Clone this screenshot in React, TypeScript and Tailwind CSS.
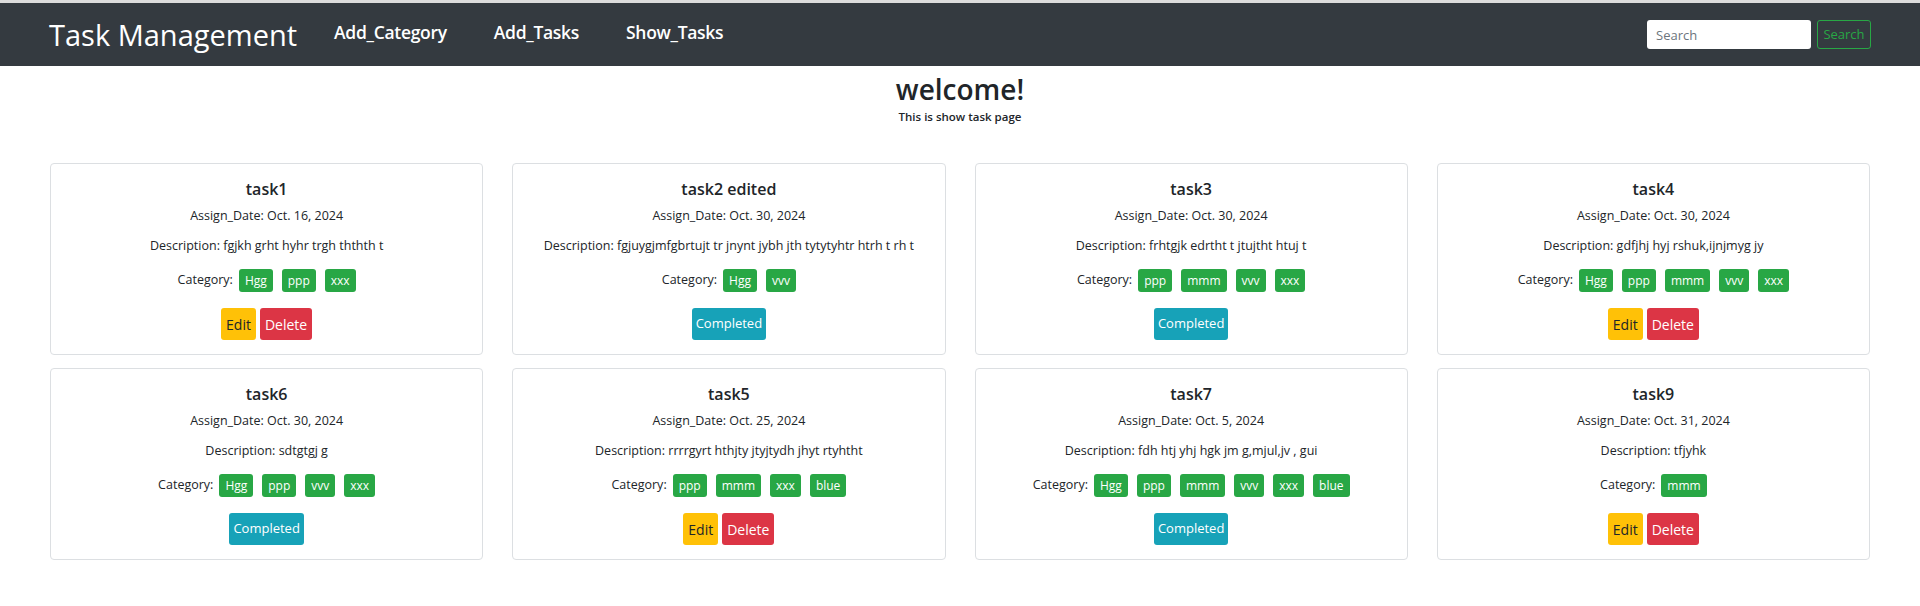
import React from "react";

type Task = {
  title: string;
  date: string;
  description: string;
  categories: string[];
  completed: boolean;
};

const tasks: Task[] = [
  { title: "task1", date: "Oct. 16, 2024", description: "fgjkh grht hyhr trgh ththth t", categories: ["Hgg", "ppp", "xxx"], completed: false },
  { title: "task2 edited", date: "Oct. 30, 2024", description: "fgjuygjmfgbrtujt tr jnynt jybh jth tytytyhtr htrh t rh t", categories: ["Hgg", "vvv"], completed: true },
  { title: "task3", date: "Oct. 30, 2024", description: "frhtgjk edrtht t jtujtht htuj t", categories: ["ppp", "mmm", "vvv", "xxx"], completed: true },
  { title: "task4", date: "Oct. 30, 2024", description: "gdfjhj hyj rshuk,ijnjmyg jy", categories: ["Hgg", "ppp", "mmm", "vvv", "xxx"], completed: false },
  { title: "task6", date: "Oct. 30, 2024", description: "sdtgtgj g", categories: ["Hgg", "ppp", "vvv", "xxx"], completed: true },
  { title: "task5", date: "Oct. 25, 2024", description: "rrrrgyrt hthjty jtyjtydh jhyt rtyhtht", categories: ["ppp", "mmm", "xxx", "blue"], completed: false },
  { title: "task7", date: "Oct. 5, 2024", description: "fdh htj yhj hgk jm g,mjul,jv , gui", categories: ["Hgg", "ppp", "mmm", "vvv", "xxx", "blue"], completed: true },
  { title: "task9", date: "Oct. 31, 2024", description: "tfjyhk", categories: ["mmm"], completed: false },
];

const TaskCard: React.FC<{ task: Task }> = ({ task }) => {
  return (
    <div className="flex flex-col items-center h-[192px] border border-[#dcdfe2] rounded-[4px] bg-white pt-[15px] text-[#212529]">
      <div className="text-[16px] leading-[20px] font-semibold">{task.title}</div>
      <div className="mt-[8px] text-[12.5px] leading-[18px]">Assign_Date: {task.date}</div>
      <div className="mt-[12px] text-[12.5px] leading-[18px]">Description: {task.description}</div>
      <div className="mt-[14px] flex items-center h-[23px] text-[12.5px]">
        <span className="mr-[6px]">Category:</span>
        <div className="flex gap-[9px]">
          {task.categories.map((c) => (
            <span key={c} className="h-[23px] flex items-center px-[6px] rounded-[3px] bg-[#28a745] text-white text-[12px]">
              {c}
            </span>
          ))}
        </div>
      </div>
      <div className="mt-[16px] flex gap-[4px]">
        {task.completed ? (
          <button className="h-[32px] px-[4px] rounded-[3px] bg-[#17a2b8] text-white text-[13px]">Completed</button>
        ) : (
          <>
            <button className="h-[32px] px-[5px] rounded-[3px] bg-[#ffc107] text-[#212529] text-[14px]">Edit</button>
            <button className="h-[32px] px-[5px] rounded-[3px] bg-[#dc3545] text-white text-[14px]">Delete</button>
          </>
        )}
      </div>
    </div>
  );
};

export default function App() {
  return (
    <div className="min-h-[606px] bg-white font-['Open_Sans',sans-serif]">
      <div className="h-[3px] bg-[#dcdcdc]"></div>
      <nav className="h-[63px] bg-[#343a40] flex items-center px-[49px]">
        <span className="text-white text-[29px] font-medium leading-none">Task Management</span>
        <ul className="flex items-center gap-[47px] ml-[37px] mb-[4px]">
          <li className="text-white text-[17.5px] font-semibold tracking-[-0.3px]">Add_Category</li>
          <li className="text-white text-[17.5px] font-semibold tracking-[-0.3px]">Add_Tasks</li>
          <li className="text-white text-[17.5px] font-semibold tracking-[-0.3px]">Show_Tasks</li>
        </ul>
        <div className="ml-auto flex items-center gap-[6px]">
          <input
            placeholder="Search"
            className="w-[164px] h-[29px] rounded-[3px] bg-white px-[9px] text-[13px] text-[#495057] placeholder:text-[#6c757d] outline-none"
          />
          <button className="w-[54px] h-[29px] rounded-[3px] border border-[#28a745] text-[#28a745] text-[13px]">Search</button>
        </div>
      </nav>
      <div className="flex flex-col items-center text-[#212529]">
        <h1 className="mt-[6px] text-[28px] leading-[34px] font-semibold">welcome!</h1>
        <p className="mt-[2px] text-[11.5px] leading-[18px] font-semibold">This is show task page</p>
      </div>
      <div className="grid grid-cols-4 gap-x-[29px] gap-y-[13px] px-[50px] mt-[37px]">
        {tasks.map((t) => (
          <TaskCard key={t.title} task={t} />
        ))}
      </div>
    </div>
  );
}
